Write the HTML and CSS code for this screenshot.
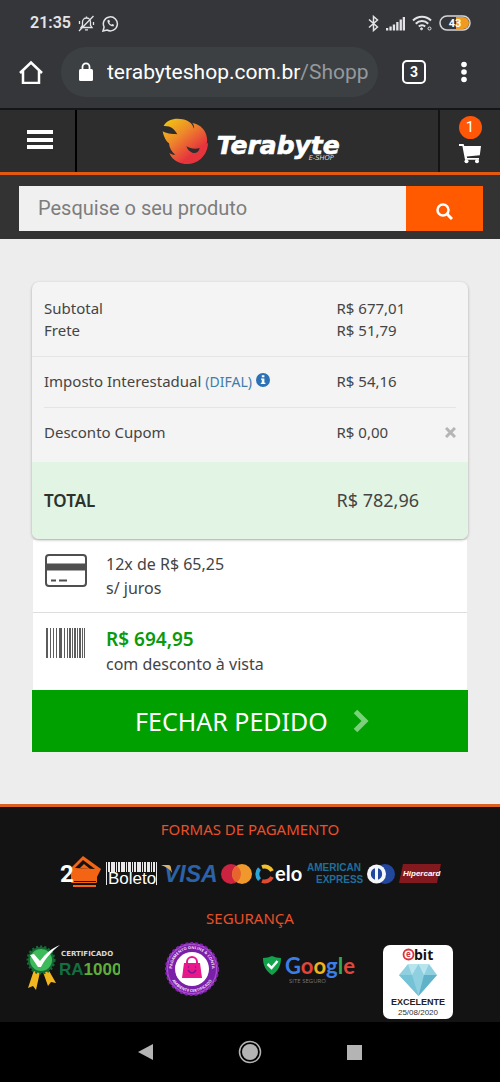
FILE: index.html
```html
<!DOCTYPE html>
<html lang="pt-BR">
<head>
    <meta charset="UTF-8">
    <meta name="viewport" content="width=device-width, initial-scale=1">
    <title>Terabyte Shop</title>
    <link rel="stylesheet" href="styles.css">
</head>
<body>
    <div class="status-bar">
        <span class="clock">21:35</span>
        <svg width="17" height="17" viewBox="0 0 17 17" fill="none" stroke="#e4e4e6" stroke-width="1.3">
            <path d="M3 12.500h11l-1.500-2.200V7a4 4 0 0 0-8 0v3.300zM7 14.800h3M8.500 3V1.500M1 16L15.500 1M1.500 6v3M15.500 7v3"/>
        </svg>
        <svg width="17" height="17" viewBox="0 0 17 17" fill="none" stroke="#e4e4e6" stroke-width="1.500">
            <path d="M1 16l1.100-4A7 7 0 1 1 5 15z"/>
            <path d="M5.500 5.200c-.6 3 3.200 6.700 6.200 6l.4-1.400-1.900-.9-.9.8c-1-.4-1.700-1.200-2-2.100l.7-.9-.8-1.900z" fill="#e4e4e6" stroke="none"/>
        </svg>
        <span class="spacer"></span>
        <svg width="11" height="17" viewBox="0 0 11 17" fill="none" stroke="#e4e4e6" stroke-width="1.500">
            <path d="M1 4.500l8.500 7.500-4 3.500v-14l4 3.500L1 12.500"/>
        </svg>
        <svg width="19" height="15" viewBox="0 0 19 15" fill="#e4e4e6">
            <path d="M0 12h2.300v2.500H0zM3.400 10.500h2.300v4H3.400zM6.800 8.500h2.300v6H6.800zM10.200 6h2.300v8.500h-2.300zM13.600 3.500h2.300v11h-2.300zM16.700 1H19v13.500h-2.300z"/>
        </svg>
        <svg width="20" height="16" viewBox="0 0 20 16" fill="none" stroke="#e4e4e6" stroke-width="2">
            <path d="M1 5.500a12.500 12.500 0 0 1 18 0M3.800 8.700a8.500 8.500 0 0 1 12.400 0M6.800 11.500a4.500 4.500 0 0 1 6.400 0"/>
            <circle cx="9.500" cy="13.800" r="1" fill="#e4e4e6" stroke-width="1"/>
            <circle cx="17.500" cy="13.500" r="1.500" stroke-width="1"/>
        </svg>
        <svg width="32" height="16" viewBox="0 0 32 16">
            <path d="M17 2h7a6 6 0 0 1 0 12h-7z" fill="#f09a1f"/>
            <rect x="1" y="1" width="30" height="14" rx="7" fill="none" stroke="#d6d6d8" stroke-width="1.500"/>
            <text class="battery-text" x="16" y="12" text-anchor="middle">43</text>
        </svg>
    </div>

    <div class="browser-bar">
        <button class="bar-btn" aria-label="Página inicial">
            <svg width="24" height="24" viewBox="0 0 24 24" fill="none" stroke="#fff" stroke-width="2.500">
                <path d="M1 13L12 2.500 23 13M4 11v12h16V11"/>
            </svg>
        </button>
        <button class="address">
            <svg class="lock" width="14" height="20" viewBox="0 0 14 20">
                <rect y="7" width="14" height="12" rx="1.500" fill="#fff"/>
                <path d="M3.500 8V4.800a3.500 3.500 0 0 1 7 0V8" fill="none" stroke="#fff" stroke-width="1.800"/>
            </svg>
            <span class="url">terabyteshop.com.br<span class="url-path">/Shopp</span></span>
        </button>
        <button class="tabs-btn">3</button>
        <button class="bar-btn" aria-label="Menu do navegador">
            <svg width="12" height="22" viewBox="0 0 12 22" fill="#fff">
                <circle cx="6" cy="3.500" r="2.800"/><circle cx="6" cy="11" r="2.800"/><circle cx="6" cy="18.500" r="2.800"/>
            </svg>
        </button>
    </div>

    <header class="site-header">
        <button class="menu-btn" aria-label="Menu">
            <svg width="26" height="22" viewBox="0 0 26 22" fill="#fff"><path d="M0 0h26v4H0zM0 8h26v4H0zM0 15h26v4H0z"/></svg>
        </button>
        <a class="logo" href="#" aria-label="Terabyte E-Shop">
            <svg width="180" height="48" viewBox="0 0 540 144">
                <defs>
                    <linearGradient id="flame" x1="0" y1="0" x2="0.8" y2="1">
                        <stop offset="0.05" stop-color="#f0c512"/>
                        <stop offset="0.4" stop-color="#ee8a2a"/>
                        <stop offset="0.8" stop-color="#e6343d"/>
                    </linearGradient>
                </defs>
                <path fill="url(#flame)" d="M5 27C14 8 40 2 62 7c18 3 30 14 34 28 1-7-1-12-5-17 26 4 42 24 44 46 1 7 0 12-1 17 2-1 3-3 4-5 0 20-8 38-22 50-20 18-48 19-70 8-12-6-20-15-24-26 6 4 12 6 18 5-12-9-18-20-19-34C13 74 5 60 2 43c9 6 26 8 44 9C38 36 26 26 5 27z"/>
                <path fill="#2d2d2d" d="M73 88c12 7 26 9 40 5-2 12-12 18-22 14-9-3-15-10-18-19z"/>
                <text class="logo-name" x="164" y="112">Terabyte</text>
                <text class="logo-sub" x="440" y="130">E-SHOP</text>
            </svg>
        </a>
        <a class="cart" href="#" aria-label="Carrinho">
            <span class="cart-count">1</span>
            <svg width="22" height="20" viewBox="0 0 22 20" fill="#fff">
                <path d="M0 0h4.600l.7 2H22l-1.200 9.200L7.800 12.500l.3 1.500H20v1.800H6L3.400 2H0z"/>
                <circle cx="7.500" cy="17.200" r="2"/><circle cx="18" cy="17.200" r="2"/>
            </svg>
        </a>
    </header>

    <form class="search">
        <input type="text" class="search-input" placeholder="Pesquise o seu produto" aria-label="Pesquise o seu produto">
        <button class="search-btn" aria-label="Buscar">
            <svg width="17" height="17" viewBox="0 0 17 17" fill="none" stroke="#fff">
                <circle cx="7" cy="7" r="5.500" stroke-width="2.500"/><path d="M11 11l5 5" stroke-width="3"/>
            </svg>
        </button>
    </form>

    <main class="checkout">
        <dl class="summary">
            <div class="row row-first">
                <dt>Subtotal</dt><dd>R$ 677,01</dd>
                <dt>Frete</dt><dd>R$ 51,79</dd>
            </div>
            <div class="row row-tax">
                <dt>Imposto Interestadual
                    <a class="difal" href="#">(DIFAL)
                        <svg class="info" width="14" height="14" viewBox="0 0 14 14">
                            <circle cx="7" cy="7" r="7" fill="#2a72b5"/>
                            <path fill="#fff" d="M5.800 2.300h2.600v2H5.800zM5 5.400h3.400v4.400h1V11H4.800V9.800h1V6.700H5z"/>
                        </svg>
                    </a>
                </dt>
                <dd>R$ 54,16</dd>
            </div>
            <div class="row row-coupon">
                <dt>Desconto Cupom</dt>
                <dd>R$ 0,00
                    <button class="remove-btn" aria-label="Remover cupom">
                        <svg width="11" height="11" viewBox="0 0 11 11" stroke="#b5b5b5" stroke-width="3"><path d="M1 1l9 9M10 1l-9 9"/></svg>
                    </button>
                </dd>
            </div>
            <div class="row row-total">
                <dt>TOTAL</dt><dd>R$ 782,96</dd>
            </div>
        </dl>

        <div class="options">
            <div class="option">
                <svg width="42" height="36" viewBox="0 0 42 36" fill="none" stroke="#4f4f4f" stroke-width="2">
                    <rect x="1" y="3" width="40" height="31" rx="3"/>
                    <path d="M1 15h40" stroke-width="7"/>
                    <path d="M6 28.500h5M14 28.500h8"/>
                </svg>
                <p>12x de R$ 65,25<br>s/ juros</p>
            </div>
            <div class="option option-cash">
                <svg width="42" height="32" viewBox="0 0 42 32" fill="#5c5c5c">
                    <path d="M1 2h2v30H1zM5 2h1v30H5zM8 2h1v30H8zM11 2h1v30h-1zM14 2h3v30h-3zM19 2h1v30h-1zM22 2h1v30h-1zM24 2h2v30h-2zM27 2h1v30h-1zM29 2h2v30h-2zM32 2h1v30h-1zM34 2h2v30h-2zM37 2h1v30h-1zM39 2h1v30h-1z"/>
                </svg>
                <p><strong class="cash-price">R$ 694,95</strong><br>com desconto à vista</p>
            </div>
        </div>

        <button class="submit-btn">
            FECHAR PEDIDO
            <svg width="16" height="24" viewBox="0 0 16 24" fill="none" stroke="#7cd07c" stroke-width="5"><path d="M2.500 2.500L12 12l-9.500 9.500"/></svg>
        </button>
    </main>

    <footer class="site-footer">
        <h2>FORMAS DE PAGAMENTO</h2>
        <ul class="payments">
            <li>
                <svg width="42" height="32" viewBox="0 0 42 32">
                    <path d="M12 11L23 0l18 13-5 10H12z" fill="#f36514"/>
                    <path d="M15 12l8-8 12 9z" fill="#131313"/>
                    <path d="M20 12l4-4 6 5z" fill="#f36514"/>
                    <rect x="11" y="14" width="26" height="13" rx="1" fill="#f36514"/>
                    <path d="M14 25.500h22M13 28h24" stroke="#131313"/>
                    <path d="M13 30h23" stroke="#f36514" stroke-width="2"/>
                    <text class="two" x="0" y="26">2</text>
                </svg>
            </li>
            <li>
                <svg width="53" height="32" viewBox="0 0 53 32">
                    <path fill="#e8e8e8" d="M1 6h1v23H1zM3 6h2v10H3zM6 6h4v10H6zM11 6h1v10h-1zM13 6h2v10h-2zM16 6h4v10h-4zM21 6h1v10h-1zM23 6h3v10h-3zM27 6h1v10h-1zM29 6h2v10h-2zM32 6h4v10h-4zM37 6h1v10h-1zM39 6h2v10h-2zM42 6h3v10h-3zM46 6h1v10h-1zM48 6h2v10h-2zM51 6h1v23h-1z"/>
                    <text class="boleto" x="3" y="28">Boleto</text>
                </svg>
            </li>
            <li>
                <svg width="57" height="32" viewBox="0 0 57 32">
                    <text class="visa" x="3" y="26">VISA</text>
                    <path d="M0 9h7c2 0 3 1 3 3l1 5C9 13 5 11 0 9z" fill="#d9b36a"/>
                </svg>
            </li>
            <li>
                <svg width="31" height="32" viewBox="0 0 31 32">
                    <circle cx="10" cy="18" r="10" fill="#cc2340"/><circle cx="21" cy="18" r="10" fill="#f0982c"/>
                    <path d="M15.500 9.700a10 10 0 0 1 0 16.600 10 10 0 0 1 0-16.600z" fill="#e8642f"/>
                </svg>
            </li>
            <li>
                <svg width="49" height="32" viewBox="0 0 49 32">
                    <g fill="none" stroke-width="4">
                        <path d="M7 11a8 8 0 0 1 10 4" stroke="#f4c02c"/>
                        <path d="M17 21a8 8 0 0 1-10 4" stroke="#df4a33"/>
                        <path d="M4.500 23.500a8 8 0 0 1 0-11" stroke="#2da4d8"/>
                    </g>
                    <text class="elo" x="20" y="25">elo</text>
                </svg>
            </li>
            <li>
                <svg class="amex" width="57" height="32" viewBox="0 0 57 32"><text x="0" y="15">AMERICAN</text><text x="9" y="27">EXPRESS</text></svg>
            </li>
            <li>
                <svg width="29" height="32" viewBox="0 0 29 32">
                    <circle cx="18" cy="18" r="10" fill="#22479e"/><circle cx="9.500" cy="18" r="9.500" fill="#f4f6fa"/>
                    <path d="M8 12.300a6 6 0 0 0 0 11.400zM11 12.300a6 6 0 0 1 0 11.400z" fill="#22479e"/>
                </svg>
            </li>
            <li>
                <svg width="42" height="32" viewBox="0 0 42 32"><path d="M4 8h38l-4 19H0z" fill="#82191e"/><text class="hiper" x="4" y="20">Hipercard</text></svg>
            </li>
        </ul>

        <h2>SEGURANÇA</h2>
        <ul class="seals">
            <li>
                <svg width="94" height="54" viewBox="0 0 94 54">
                    <path d="M8 29l-6 18 5-2 3 4 4-18zM17 31l5 14 3-4 5 1-8-14z" fill="#f2b71f"/>
                    <circle cx="15" cy="19" r="13" fill="#156b35" stroke="#156b35" stroke-width="3" stroke-dasharray="2 2"/>
                    <circle cx="15" cy="19" r="11" fill="#3dba5a"/>
                    <path d="M4 14l4-1 6 7C20 12 26 7 34 4 26 10 19 18 15 26h-3z" fill="#fff"/>
                    <text class="cert" x="35" y="15">CERTIFICADO</text>
                    <text class="ra" x="33" y="34"><tspan fill="#11703f">RA</tspan><tspan fill="#5fae3a">1000</tspan></text>
                </svg>
            </li>
            <li>
                <svg width="56" height="56" viewBox="0 0 56 56">
                    <defs>
                        <path id="arcTop" d="M8 28a20 20 0 0 1 40 0"/>
                        <path id="arcBottom" d="M5 28a23 23 0 0 0 46 0"/>
                    </defs>
                    <circle cx="28" cy="28" r="25" fill="#7a1fa8" stroke="#a64bd0" stroke-width="2"/>
                    <circle cx="28" cy="28" r="26" fill="none" stroke="#8420ad" stroke-width="2" stroke-dasharray="3 2"/>
                    <circle cx="28" cy="28" r="17" fill="#fff"/>
                    <text class="arc-text" text-anchor="middle"><textPath href="#arcTop" startOffset="50%">PAGAMENTO ONLINE &amp; CONTA</textPath></text>
                    <text class="arc-text" text-anchor="middle"><textPath href="#arcBottom" startOffset="50%">AMBIENTE CERTIFICADO</textPath></text>
                    <path d="M20 22h16l2 15H18z" fill="#e8178c"/>
                    <path d="M23 23v-2a5 5 0 0 1 10 0v2" fill="none" stroke="#e8178c" stroke-width="2"/>
                    <path d="M24 29q4 6 8 0M24 26h1M31 26h1" fill="none" stroke="#7b1795" stroke-width="1.500"/>
                </svg>
            </li>
            <li>
                <svg width="96" height="56" viewBox="0 0 96 56">
                    <path d="M0 17q5 0 9-2 4 2 9 2c0 8-3 13-9 17C3 30 0 25 0 17z" fill="#12a24b"/>
                    <path d="M4.500 23l4 4 6-7" fill="none" stroke="#fff" stroke-width="2.500"/>
                    <text class="google" x="22" y="33"><tspan fill="#3c7ee8">G</tspan><tspan fill="#e2453a">o</tspan><tspan fill="#f0b51c">o</tspan><tspan fill="#3c7ee8">g</tspan><tspan fill="#36a853">l</tspan><tspan fill="#e2453a">e</tspan></text>
                    <text class="secure" x="26" y="42">SITE SEGURO</text>
                </svg>
            </li>
            <li>
                <svg width="70" height="78" viewBox="0 0 70 78">
                    <rect y="4" width="70" height="74" rx="7" fill="#fff"/>
                    <circle cx="25.500" cy="13.500" r="5" fill="#fff" stroke="#d93240" stroke-width="1.800"/>
                    <text class="ebit-e" x="23" y="16">e</text>
                    <text class="ebit" x="31" y="19">bit</text>
                    <path d="M25 23h21l8 11-18.500 21L16 34z" fill="#8fd0e0"/>
                    <path d="M16 34h13l6.500 21z" fill="#75c1d5"/><path d="M41 34h13L35.500 55z" fill="#5fb2c8"/>
                    <path d="M25 23l4 11 6.500-11L41 34l5-11z" fill="#b8e4ed"/>
                    <text class="ebit-rank" x="35" y="64" text-anchor="middle">EXCELENTE</text>
                    <text class="ebit-date" x="35" y="74" text-anchor="middle">25/08/2020</text>
                </svg>
            </li>
        </ul>
    </footer>

    <nav class="system-nav">
        <button class="bar-btn" aria-label="Voltar"><svg width="15" height="18" viewBox="0 0 15 18" fill="#b4b4b4"><path d="M15 1v16L0 9z"/></svg></button>
        <button class="bar-btn" aria-label="Início">
            <svg width="24" height="24" viewBox="0 0 24 24"><circle cx="12" cy="12" r="10.500" fill="none" stroke="#b4b4b4" stroke-width="1.500"/><circle cx="12" cy="12" r="8" fill="#b4b4b4"/></svg>
        </button>
        <button class="bar-btn" aria-label="Recentes"><svg width="15" height="15" viewBox="0 0 15 15" fill="#b4b4b4"><path d="M0 0h15v15H0z"/></svg></button>
    </nav>
</body>
</html>
```

FILE: styles.css
```css
* {
    box-sizing: border-box;
}
body {
    margin: 0;
    min-height: 100vh;
    display: flex;
    flex-direction: column;
    background: #000;
    font-family: "Noto Sans", "Open Sans", sans-serif;
    font-size: 15px;
    line-height: 22px;
    color: #444;
}
button {
    border: none;
    padding: 0;
    background: none;
    font: inherit;
    color: inherit;
    cursor: pointer;
}
svg {
    display: block;
    flex: none;
}
ul, dl, dd, p, h2 {
    margin: 0;
    padding: 0;
}
ul {
    list-style: none;
}

/* phone status bar */
.status-bar {
    display: flex;
    align-items: center;
    gap: 7px;
    padding: 13px 29px 13px 30px;
    background: #35363a;
    color: #e4e4e6;
    font-family: Roboto, sans-serif;
    font-size: 16px;
    font-weight: 600;
    line-height: 20px;
}
.spacer {
    flex: 1;
}
.battery-text {
    font: bold 11px Roboto, sans-serif;
    fill: #fff;
}

/* browser bar */
.browser-bar {
    display: flex;
    align-items: center;
    padding: 1px 30px 11px 19px;
    background: #35363a;
}
.address {
    flex: 1;
    min-width: 0;
    display: flex;
    align-items: center;
    gap: 14px;
    margin: 0 24px 0 18px;
    padding: 12px 8px 12px 18px;
    border-radius: 25px;
    background: #3c4043;
    color: #fff;
    font-family: Roboto, sans-serif;
    font-size: 21px;
    line-height: 26px;
}
.url {
    overflow: hidden;
    white-space: nowrap;
}
.url-path {
    color: #96999c;
}
.tabs-btn {
    width: 24px;
    margin-right: 32px;
    border: 2px solid #fff;
    border-radius: 5px;
    color: #fff;
    font-family: Roboto, sans-serif;
    font-size: 14px;
    font-weight: bold;
    line-height: 20px;
}

/* site header */
.site-header {
    display: grid;
    grid-template-columns: 77px 1fr 62px;
    border-top: 2px solid #141718;
    border-bottom: 3px solid #e2590f;
    background: #2d2d2d;
}
.menu-btn {
    display: flex;
    align-items: center;
    justify-content: center;
    padding-left: 4px;
    border-right: 2px solid #000;
}
.logo {
    display: flex;
    justify-content: center;
    padding: 7px 12px 7px 0;
}
.logo-name {
    font: italic bold 75px "DejaVu Sans", sans-serif;
    fill: #fff;
    stroke: #fff;
    stroke-width: 2;
}
.logo-sub {
    font: italic 20px "DejaVu Sans", sans-serif;
    fill: #ddd;
}
.cart {
    display: flex;
    flex-direction: column;
    align-items: center;
    gap: 5px;
    padding-top: 6px;
    border-left: 2px solid #141414;
    text-decoration: none;
}
.cart-count {
    width: 23px;
    border-radius: 50%;
    background: #ff5708;
    color: #fff;
    font-family: Roboto, sans-serif;
    line-height: 23px;
    text-align: center;
}
.search {
    display: flex;
    padding: 11px 17px 8px 19px;
    background: #333;
}
.search-input {
    flex: 1;
    min-width: 0;
    padding: 10px 19px;
    border: none;
    background: #f0f0f0;
    font-family: Roboto, sans-serif;
    font-size: 20px;
    line-height: 25px;
}
.search-input::placeholder {
    color: #7d7d7d;
}
.search-btn {
    width: 77px;
    padding-top: 6px;
    display: flex;
    align-items: center;
    justify-content: center;
    background: #ff5a00;
}

/* order summary */
.checkout {
    flex: 1;
    padding: 43px 32px 52px;
    background: #ededed;
}
.summary {
    position: relative;
    border-radius: 7px;
    overflow: hidden;
    background: #f4f4f4;
    box-shadow: 0 1px 3px rgba(0,0,0,0.3);
}
.row {
    display: grid;
    grid-template-columns: 71% 1fr;
    padding: 13px 0 14px;
    margin: 0 12px;
}
.row-first {
    margin: 0;
    padding: 15px 12px;
    border-bottom: 1px solid #e6e4e2;
}
.row-coupon {
    padding: 13px 0 19px;
    border-top: 1px solid #e4e4e4;
}
.row-coupon dd {
    display: flex;
    align-items: center;
    justify-content: space-between;
}
.row-total {
    margin: 0;
    padding: 26px 12px;
    background: #e2f4e3;
    font-size: 18px;
    line-height: 25px;
}
.row-total dt {
    font-size: 17px;
    font-weight: 600;
    color: #2c332c;
}
.difal {
    color: #3f7cac;
    font-size: 14px;
    text-decoration: none;
}
.info {
    display: inline-block;
    vertical-align: 0;
}
.options {
    margin: 1px 1px 0;
    background: #fff;
    font-size: 16px;
    line-height: 24px;
}
.option {
    display: flex;
    gap: 19px;
    padding: 12px;
}
.option-cash {
    padding: 13px 12px 14px;
    border-top: 1px solid #ddd;
}
.cash-price {
    color: #0a9a0a;
    font-size: 19px;
    font-weight: 600;
    line-height: 26px;
}
.submit-btn {
    width: 100%;
    display: flex;
    align-items: center;
    justify-content: center;
    gap: 25px;
    padding: 14px 12px 14px 16px;
    background: #00a000;
    color: #fff;
    font-size: 25px;
    line-height: 34px;
}

/* footer */
.site-footer {
    border-top: 3px solid #d9601f;
    padding: 12px 0 3px;
    background: #131313;
}
.site-footer h2 {
    color: #e8502a;
    font-size: 15px;
    font-weight: normal;
    line-height: 20px;
    text-align: center;
}
.payments {
    display: flex;
    justify-content: center;
    gap: 3px;
    margin: 17px 0 20px;
}
.two {
    font: bold 24px Roboto, sans-serif;
    fill: #fff;
}
.boleto {
    font: 17px "Liberation Sans", sans-serif;
    fill: #fff;
}
.visa {
    font: italic bold 23px "Liberation Sans", sans-serif;
    fill: #2b62a8;
}
.elo {
    font: bold 20px Lato, sans-serif;
    fill: #fff;
}
.amex text {
    font: bold 10px "Liberation Sans", sans-serif;
    fill: #1f6f9c;
}
.hiper {
    font: italic bold 8px "Liberation Sans", sans-serif;
    fill: #fff;
}
.seals {
    display: grid;
    grid-template-columns: 1fr 1fr 1fr 96px;
    justify-items: center;
    margin-top: 13px;
    padding: 0 34px 0 14px;
}
.cert {
    font: bold 7px "DejaVu Sans", sans-serif;
    fill: #d8d8d8;
}
.ra {
    font: bold 17px "Liberation Sans", sans-serif;
}
.arc-text {
    font: bold 4px "Open Sans", sans-serif;
    fill: #f0dcf8;
}
.google {
    font: bold 22px Lato, sans-serif;
}
.secure {
    font: 6px "Open Sans", sans-serif;
    fill: #777;
}
.ebit-e {
    font: bold 8px "Open Sans", sans-serif;
    fill: #d93240;
}
.ebit {
    font: bold 14px "Open Sans", sans-serif;
    fill: #111;
}
.ebit-rank {
    font: bold 9px "Liberation Sans", sans-serif;
    fill: #222;
}
.ebit-date {
    font: 8px "Liberation Sans", sans-serif;
    fill: #333;
}

/* phone navigation */
.system-nav {
    display: flex;
    align-items: center;
    justify-content: center;
    gap: 85px;
    padding: 18px;
    background: #000;
}
```
